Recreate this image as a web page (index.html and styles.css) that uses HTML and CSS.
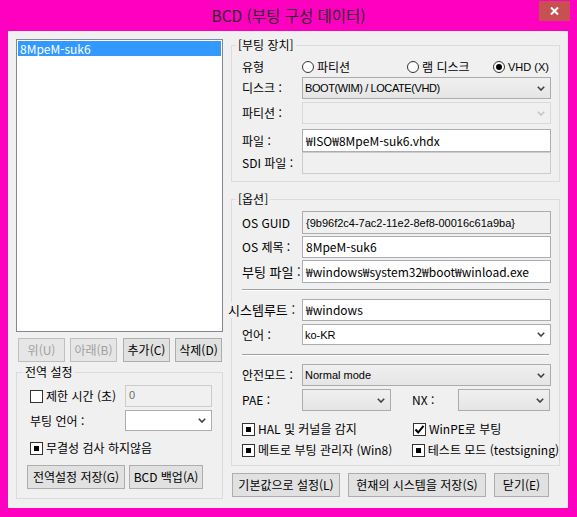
FILE: index.html
```html
<!DOCTYPE html>
<html lang="ko">
<head>
<meta charset="utf-8">
<title>BCD</title>
<link rel="stylesheet" href="styles.css">
</head>
<body>
<div class="titlebar">
  <span class="title">BCD (부팅 구성 데이터)</span>
  <div class="close"><svg width="9" height="8" viewBox="0 0 9 8"><path d="M1 0.5 L8 7.5 M8 0.5 L1 7.5" stroke="#fff" stroke-width="2"/></svg></div>
</div>
<div class="client">
  <div class="left">
    <div class="listbox"><div class="item sel">8MpeM-suk6</div></div>
    <div class="btnrow">
      <div class="btn sm off">위(U)</div>
      <div class="btn sm off b2">아래(B)</div>
      <div class="btn sm b3">추가(C)</div>
      <div class="btn sm b4">삭제(D)</div>
    </div>
    <div class="group gl">
      <div class="legend">전역 설정</div>
      <div class="lrow lr1">
        <span class="chk"><span class="box"></span>제한 시간 (초)</span>
        <div class="input dis w87 ztxt">0</div>
      </div>
      <div class="lrow lr2">
        <span class="ltxt">부팅 언어 :</span>
        <div class="combo white w87"><span></span><svg class="chev" width="8" height="5" viewBox="0 0 8 5"><path d="M0.8 0.8 L4 4 L7.2 0.8" fill="none" stroke="#404040" stroke-width="1.6"/></svg></div>
      </div>
      <div class="lrow lr3">
        <span class="chk"><span class="box ind"></span>무결성 검사 하지않음</span>
      </div>
      <div class="lrow lr4">
        <div class="btn gbtn1">전역설정 저장(G)</div>
        <div class="btn gbtn2">BCD 백업(A)</div>
      </div>
    </div>
  </div>

  <div class="right">
    <div class="group g1">
      <div class="legend">[부팅 장치]</div>
      <div class="frow rtype">
        <span class="lbl">유형</span>
        <span class="radio ra"><span class="rc"></span>파티션</span>
        <span class="radio rb"><span class="rc"></span>램 디스크</span>
        <span class="radio"><span class="rc on"></span><span class="tah">VHD (X)</span></span>
      </div>
      <div class="frow mt2">
        <span class="lbl">디스크 :</span>
        <div class="combo list wfull"><span class="tah tight">BOOT(WIM) / LOCATE(VHD)</span><svg class="chev" width="8" height="5" viewBox="0 0 8 5"><path d="M0.8 0.8 L4 4 L7.2 0.8" fill="none" stroke="#404040" stroke-width="1.6"/></svg></div>
      </div>
      <div class="frow mt3">
        <span class="lbl">파티션 :</span>
        <div class="combo dis wfull"><span></span><svg class="chev" width="8" height="5" viewBox="0 0 8 5"><path d="M0.8 0.8 L4 4 L7.2 0.8" fill="none" stroke="#c4c4c4" stroke-width="1.6"/></svg></div>
      </div>
      <div class="frow mt5 h23">
        <span class="lbl">파일 :</span>
        <div class="input wfull">₩ISO₩8MpeM-suk6.vhdx</div>
      </div>
      <div class="frow">
        <span class="lbl">SDI 파일 :</span>
        <div class="input dis wfull"></div>
      </div>
    </div>

    <div class="group g2">
      <div class="legend">[옵션]</div>
      <div class="frow mt4 h23">
        <span class="lbl">OS GUID</span>
        <div class="input ro wfull"><span class="tah">{9b96f2c4-7ac2-11e2-8ef8-00016c61a9ba}</span></div>
      </div>
      <div class="frow mt2">
        <span class="lbl">OS 제목 :</span>
        <div class="input wfull">8MpeM-suk6</div>
      </div>
      <div class="frow mt2 h23">
        <span class="lbl big">부팅 파일 :</span>
        <div class="input wfull">₩windows₩system32₩boot₩winload.exe</div>
      </div>
      <div class="sep sep1"></div>
      <div class="frow mt8">
        <span class="lbl big wide">시스템루트 :</span>
        <div class="input wfull">₩windows</div>
      </div>
      <div class="frow mt3 h21">
        <span class="lbl">언어 :</span>
        <div class="combo white wfull"><span class="tah">ko-KR</span><svg class="chev" width="8" height="5" viewBox="0 0 8 5"><path d="M0.8 0.8 L4 4 L7.2 0.8" fill="none" stroke="#404040" stroke-width="1.6"/></svg></div>
      </div>
      <div class="sep sep2"></div>
      <div class="frow mt8">
        <span class="lbl">안전모드 :</span>
        <div class="combo list wfull"><span class="tah">Normal mode</span><svg class="chev" width="8" height="5" viewBox="0 0 8 5"><path d="M0.8 0.8 L4 4 L7.2 0.8" fill="none" stroke="#404040" stroke-width="1.6"/></svg></div>
      </div>
      <div class="frow mt3">
        <span class="lbl">PAE :</span>
        <div class="combo list wpae"><span></span><svg class="chev" width="8" height="5" viewBox="0 0 8 5"><path d="M0.8 0.8 L4 4 L7.2 0.8" fill="none" stroke="#404040" stroke-width="1.6"/></svg></div>
        <span class="lbl nx">NX :</span>
        <div class="combo list wnx"><span></span><svg class="chev" width="8" height="5" viewBox="0 0 8 5"><path d="M0.8 0.8 L4 4 L7.2 0.8" fill="none" stroke="#404040" stroke-width="1.6"/></svg></div>
      </div>
      <div class="crow mt11">
        <span class="chk c1"><span class="box ind"></span>HAL 및 커널을 감지</span>
        <span class="chk"><span class="box"><svg width="11" height="11" viewBox="0 0 11 11"><path d="M1.5 5.5 L4.2 8.5 L9.5 1.8" fill="none" stroke="#000" stroke-width="2"/></svg></span>WinPE로 부팅</span>
      </div>
      <div class="crow mt7">
        <span class="chk c1"><span class="box ind"></span>메트로 부팅 관리자 (Win8)</span>
        <span class="chk"><span class="box ind"></span>테스트 모드 (testsigning)</span>
      </div>
    </div>

    <div class="bottom">
      <div class="btn bb1">기본값으로 설정(L)</div>
      <div class="btn bb2">현재의 시스템을 저장(S)</div>
      <div class="btn bb3">닫기(E)</div>
    </div>
  </div>
</div>
</body>
</html>
```

FILE: styles.css
```css
* { box-sizing: border-box; }
html, body { margin: 0; padding: 0; }
body {
  width: 577px;
  height: 517px;
  overflow: hidden;
  background: #ff00c0;
  font-family: "Noto Sans CJK KR", "Liberation Sans", sans-serif;
  font-size: 12px;
  line-height: 16px;
  color: #000;
}

.titlebar {
  height: 31px;
  display: flex;
  align-items: center;
  justify-content: center;
  position: relative;
}
.title { font-size: 15.5px; color: #2a2a2a; margin-top: -1px; }
.close {
  position: absolute;
  left: 539px;
  top: 1px;
  width: 31px;
  height: 20px;
  background: #c75050;
  display: flex;
  align-items: center;
  justify-content: center;
}

.client {
  margin-left: 8px;
  width: 560px;
  height: 477px;
  background: #f0f0f0;
  display: flex;
}

/* left column */
.left {
  width: 215px;
  flex: none;
  padding: 8px 0 0 8px;
  display: flex;
  flex-direction: column;
}
.listbox {
  width: 207px;
  height: 293px;
  border: 1px solid #828790;
  background: #fff;
  padding: 1px;
}
.item { height: 15px; line-height: 15px; padding-left: 2px; }
.item.sel { background: #3399ff; color: #fff; }

.btnrow { display: flex; margin-top: 6px; padding-left: 2px; }
.btn {
  height: 24px;
  border: 1px solid #adadad;
  background: #e1e1e1;
  display: flex;
  align-items: center;
  justify-content: center;
  white-space: nowrap;
  flex: none;
}
.btn.sm { width: 47px; }
.btn.off { color: #a0a0a0; border-color: #bfbfbf; background: #e6e6e6; }
.b2 { margin-left: 5px; }
.b3 { margin-left: 6px; }
.b4 { margin-left: 5px; }

.group {
  border: 1px solid #dcdcdc;
  display: flex;
  flex-direction: column;
}
.legend {
  margin-top: -9px;
  height: 16px;
  width: fit-content;
  padding: 0 2px;
  background: #f0f0f0;
  white-space: nowrap;
}
.gl { margin-top: 10px; width: 207px; height: 127px; }
.gl .legend { margin-left: 6px; }

.lrow { display: flex; align-items: center; }
.lr1 { margin-top: 5px; height: 22px; padding-left: 13px; }
.lr2 { margin-top: 3px; height: 21px; padding-left: 13px; }
.lr3 { margin-top: 10px; height: 14px; padding-left: 13px; }
.lr4 { margin-top: 10px; padding-left: 10px; }
.lr1 .input, .lr2 .combo { margin-left: auto; margin-right: 10px; }
.gbtn1 { width: 98px; }
.gbtn2 { width: 74px; margin-left: 4px; }

.w87 { width: 87px; height: 100%; }

/* controls */
.chk { display: flex; align-items: center; white-space: nowrap; }
.box {
  width: 13px;
  height: 13px;
  border: 1px solid #333;
  background: #fff;
  margin-right: 3px;
  display: flex;
  align-items: center;
  justify-content: center;
  flex: none;
}
.box.ind::after {
  content: "";
  width: 5px;
  height: 5px;
  background: #000;
}

.input {
  height: 100%;
  border: 1px solid #abadb3;
  background: #fff;
  padding-left: 3px;
  display: flex;
  align-items: center;
  white-space: nowrap;
  overflow: hidden;
}
.input.dis { background: #f0f0f0; border-color: #cccccc; }
.input.ro { background: #f0f0f0; border-color: #acacac; }
.ztxt { align-items: flex-start; color: #6d6d6d; font-family: "Liberation Sans", sans-serif; font-size: 11px; padding-top: 1px; }

.combo {
  height: 100%;
  border: 1px solid #acacac;
  display: flex;
  align-items: center;
  justify-content: space-between;
  padding: 0 5px 0 2px;
  white-space: nowrap;
}
.combo.list { background: linear-gradient(#f0f0f0, #e5e5e5); }
.combo.white { background: #fff; border-color: #abadb3; }
.combo.dis { background: #f0f0f0; border-color: #d9d9d9; }
.chev { flex: none; }

.tah { font-family: "Liberation Sans", sans-serif; font-size: 11px; }
.tight { letter-spacing: -0.4px; }

/* right column */
.right {
  width: 345px;
  flex: none;
  padding-left: 8px;
  display: flex;
  flex-direction: column;
}
.g1 { margin-top: 14px; width: 329px; height: 137px; padding-left: 10px; }
.g2 { margin-top: 17px; width: 329px; height: 267px; padding-left: 10px; }
.right .legend { margin-left: -6px; }

.frow { display: flex; align-items: center; height: 22px; flex: none; }
.h23 { height: 23px; }
.h21 { height: 21px; }
.mt2 { margin-top: 2px; }
.mt3 { margin-top: 3px; }
.mt4 { margin-top: 4px; }
.mt5 { margin-top: 5px; }
.mt7 { margin-top: 7px; }
.mt8 { margin-top: 8px; }
.mt11 { margin-top: 11px; }

.lbl { width: 60px; flex: none; white-space: nowrap; }
.lbl.big { font-size: 13px; }
.lbl.wide { margin-left: -14px; width: 74px; background: #f0f0f0; position: relative; }
.lbl.nx { width: 46px; margin-left: 21px; }
.wfull { width: 249px; }
.wpae { width: 89px; }
.wnx { width: 92px; }

.rtype { margin-top: 6px; height: 16px; }
.radio { display: flex; align-items: center; white-space: nowrap; }
.ra { width: 105px; }
.rb { width: 86px; }
.rc {
  width: 12px;
  height: 12px;
  border: 1px solid #333;
  border-radius: 50%;
  background: #fff;
  margin-right: 3px;
  display: flex;
  align-items: center;
  justify-content: center;
  flex: none;
}
.rc.on::after {
  content: "";
  width: 6px;
  height: 6px;
  border-radius: 50%;
  background: #000;
}

.sep {
  width: 307px;
  border-top: 1px solid #a0a0a0;
  border-bottom: 1px solid #ffffff;
  flex: none;
}
.sep1 { margin-top: 6px; }
.sep2 { margin-top: 9px; }

.crow { display: flex; align-items: center; height: 14px; flex: none; }
.c1 { width: 171px; }

.bottom { display: flex; margin-top: 7px; margin-left: 1px; }
.bb1 { width: 108px; }
.bb2 { width: 138px; margin-left: 8px; }
.bb3 { width: 55px; margin-left: 8px; }
```
